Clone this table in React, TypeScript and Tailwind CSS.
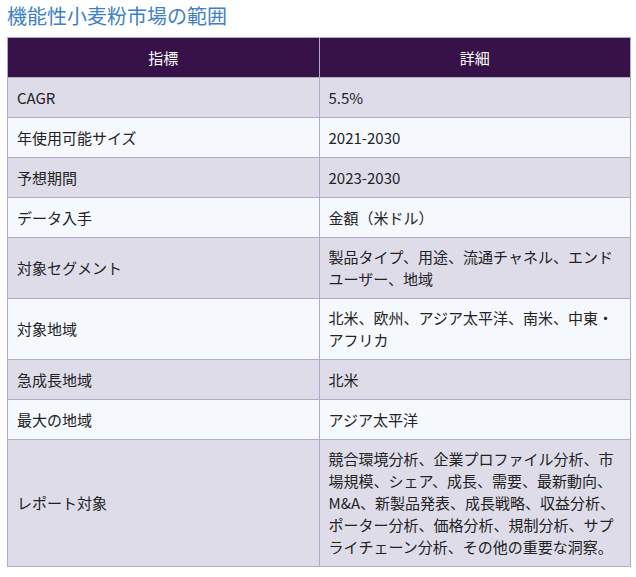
import React from "react";

const rows: [string, string][] = [
  ["CAGR", "5.5%"],
  ["年使用可能サイズ", "2021-2030"],
  ["予想期間", "2023-2030"],
  ["データ入手", "金額（米ドル）"],
  ["対象セグメント", "製品タイプ、用途、流通チャネル、エンドユーザー、地域"],
  ["対象地域", "北米、欧州、アジア太平洋、南米、中東・アフリカ"],
  ["急成長地域", "北米"],
  ["最大の地域", "アジア太平洋"],
  [
    "レポート対象",
    "競合環境分析、企業プロファイル分析、市場規模、シェア、成長、需要、最新動向、M&A、新製品発表、成長戦略、収益分析、ポーター分析、価格分析、規制分析、サプライチェーン分析、その他の重要な洞察。",
  ],
];

export default function App() {
  return (
    <div
      className="w-[636px] h-[577px] bg-white overflow-hidden"
      style={{ fontFamily: '"Noto Sans CJK JP", "Noto Sans", sans-serif' }}
    >
      <h2 className="pl-[7px] pt-[3px] h-[37px] text-[20px] leading-[26px] text-[#3f7fc4] font-normal">
        機能性小麦粉市場の範囲
      </h2>
      <table className="ml-[7px] w-[624px] border-collapse table-fixed text-[15px] leading-[22px] text-[#222]">
        <thead>
          <tr className="bg-[#361249] text-white h-[40px]">
            <th className="w-1/2 border border-[#b3aacb] font-normal text-center">指標</th>
            <th className="w-1/2 border border-[#b3aacb] font-normal text-center">詳細</th>
          </tr>
        </thead>
        <tbody>
          {rows.map(([a, b], i) => (
            <tr key={i} className={(i % 2 === 0 ? "bg-[#dfdcea]" : "bg-[#f5f8fd]") + " h-[40px]"}>
              <td className="border border-[#b3aacb] px-[9px] py-[8px] align-middle">{a}</td>
              <td className="border border-[#b3aacb] px-[9px] py-[8px] align-middle">{b}</td>
            </tr>
          ))}
        </tbody>
      </table>
    </div>
  );
}
